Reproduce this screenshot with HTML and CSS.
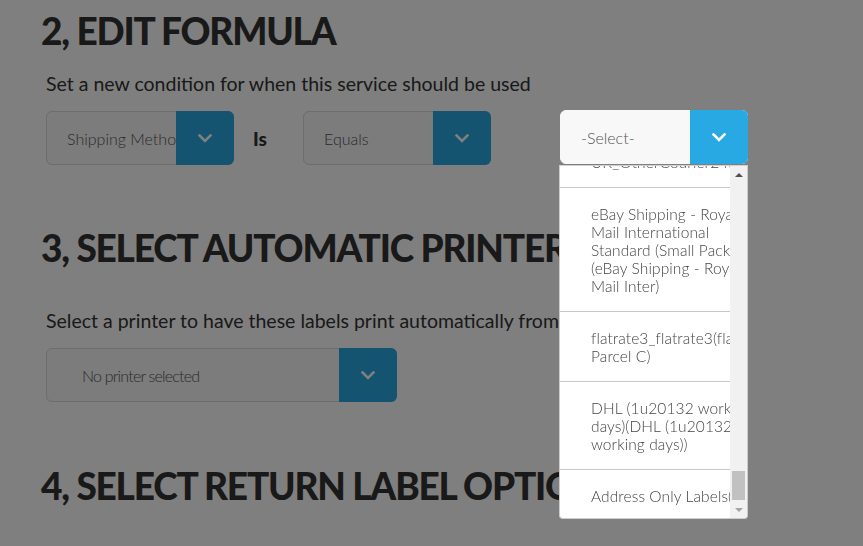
FILE: index.html
```html
<!DOCTYPE html>
<html lang="en">
<head>
<meta charset="utf-8">
<title>Edit rule</title>
<link rel="stylesheet" href="styles.css">
</head>
<body>
<main class="page">
  <section class="step step-formula">
    <h2 class="step-title">2, EDIT FORMULA</h2>
    <p class="step-lead">Set a new condition for when this service should be used</p>
    <div class="cond-row">
      <div class="select">
        <span class="select-value">Shipping Method</span>
        <span class="select-btn"><svg viewBox="0 0 14 9" width="14" height="9"><path d="M1.5 1.5 L7 7 L12.5 1.5" /></svg></span>
      </div>
      <span class="cond-op">Is</span>
      <div class="select">
        <span class="select-value">Equals</span>
        <span class="select-btn"><svg viewBox="0 0 14 9" width="14" height="9"><path d="M1.5 1.5 L7 7 L12.5 1.5" /></svg></span>
      </div>
      <div class="select select-open">
        <span class="select-value">-Select-</span>
        <span class="select-btn"><svg viewBox="0 0 14 9" width="14" height="9"><path d="M1.5 1.5 L7 7 L12.5 1.5" /></svg></span>
        <div class="menu">
          <ul class="menu-list">
            <li class="menu-item">UK_OtherCourier24(UK_OtherCourier24)</li>
            <li class="menu-item"><span class="ln">eBay Shipping - Royal</span><span class="ln">Mail International</span><span class="ln">Standard (Small Packet)</span><span class="ln">(eBay Shipping - Royal</span><span class="ln">Mail Inter)</span></li>
            <li class="menu-item"><span class="ln">flatrate3_flatrate3(flatrate3 -</span><span class="ln">Parcel C)</span></li>
            <li class="menu-item"><span class="ln">DHL (1u20132 working</span><span class="ln">days)(DHL (1u20132</span><span class="ln">working days))</span></li>
            <li class="menu-item">Address Only Labels(Address Only Labels)</li>
          </ul>
          <div class="scrollbar">
            <span class="sb-arrow sb-up"></span>
            <span class="sb-track"><span class="sb-thumb"></span></span>
            <span class="sb-arrow sb-down"></span>
          </div>
        </div>
      </div>
    </div>
  </section>

  <section class="step step-printer">
    <h2 class="step-title">3, SELECT AUTOMATIC PRINTER</h2>
    <p class="step-lead">Select a printer to have these labels print automatically from, when using this rule.</p>
    <div class="select select-wide">
      <span class="select-value select-value-indent">No printer selected</span>
      <span class="select-btn"><svg viewBox="0 0 14 9" width="14" height="9"><path d="M1.5 1.5 L7 7 L12.5 1.5" /></svg></span>
    </div>
  </section>

  <section class="step step-return">
    <h2 class="step-title">4, SELECT RETURN LABEL OPTIONS</h2>
  </section>
</main>
<div class="backdrop"></div>
</body>
</html>
```

FILE: styles.css
```css
* { box-sizing: border-box; }

html, body {
  margin: 0;
  padding: 0;
  background: #ffffff;
  width: 863px;
  height: 546px;
  overflow: hidden;
}

body {
  font-family: "Lato", "Open Sans", sans-serif;
  color: #333333;
}

.page {
  padding: 9px 0 0 41px;
}

.step-title {
  margin: 0;
  font-size: 37px;
  line-height: 44px;
  font-weight: 900;
  letter-spacing: -1.2px;
  color: #333333;
  white-space: nowrap;
}

.step-lead {
  margin: 18px 0 0 5px;
  font-size: 19.5px;
  line-height: 26px;
  font-weight: 400;
  color: #333333;
  white-space: nowrap;
}

.cond-row {
  display: flex;
  align-items: flex-start;
  margin: 14px 0 0 5px;
}

.select {
  position: relative;
  display: flex;
  align-items: stretch;
  width: 188px;
  height: 54px;
  background: #f8f8f8;
  border: 1px solid #dadada;
  border-radius: 6px;
}

.select-wide {
  width: 351px;
  margin-left: 5px;
}

.select-value {
  flex: 1;
  display: flex;
  align-items: center;
  padding-left: 20px;
  font-size: 16px;
  font-weight: 300;
  color: #555555;
  white-space: nowrap;
  overflow: hidden;
}

.select-value-indent {
  padding-left: 35px;
  letter-spacing: -0.8px;
}

.select-btn {
  flex: 0 0 58px;
  display: flex;
  align-items: center;
  justify-content: center;
  margin: -1px -1px -1px 0;
  background: #29a9e3;
  border-radius: 0 6px 6px 0;
}

.select-btn svg path {
  fill: none;
  stroke: #ffffff;
  stroke-width: 2.6;
  stroke-linecap: square;
}

.cond-op {
  align-self: center;
  width: 69px;
  padding-left: 19px;
  font-size: 19px;
  font-weight: 900;
  color: #333333;
}

.select-open {
  margin: -1px 0 0 69px;
  z-index: 20;
  border-color: #f8f8f8;
}

.menu {
  position: absolute;
  top: 54px;
  left: -2px;
  width: 189px;
  height: 354px;
  display: flex;
  background: #ffffff;
  border: 1px solid #cccccc;
  border-top: 1px solid #d0d0d0;
  border-radius: 0 0 4px 4px;
  overflow: hidden;
}

.menu-list {
  flex: 1;
  list-style: none;
  margin: -30px 0 0 0;
  padding: 0;
  overflow: hidden;
}

.menu-item {
  padding: 17px 0 16px 31px;
  border-bottom: 1px solid #c8c8c8;
  font-size: 15.5px;
  line-height: 18px;
  font-weight: 300;
  letter-spacing: 0.1px;
  color: #444444;
  white-space: nowrap;
}

.menu-item .ln {
  display: block;
}

.scrollbar {
  flex: 0 0 17px;
  display: flex;
  flex-direction: column;
  background: #f1f1f1;
}

.sb-arrow {
  flex: 0 0 17px;
  display: flex;
  align-items: center;
  justify-content: center;
}

.sb-arrow::before {
  content: "";
  width: 0;
  height: 0;
  border-left: 4px solid transparent;
  border-right: 4px solid transparent;
}

.sb-up::before {
  border-bottom: 4px solid #505050;
}

.sb-down::before {
  border-top: 4px solid #a3a3a3;
}

.sb-track {
  flex: 1;
  display: flex;
  flex-direction: column;
  justify-content: flex-end;
  padding: 0 2px 1px 2px;
}

.sb-thumb {
  height: 29px;
  background: #c1c1c1;
}

.step-printer {
  margin-top: 61px;
}

.step-printer .step-lead {
  margin-top: 38px;
}

.step-printer .select-wide {
  margin-top: 14px;
}

.step-return {
  margin-top: 62px;
}

.backdrop {
  position: fixed;
  inset: 0;
  background: rgba(0, 0, 0, 0.5);
  z-index: 10;
}
```
